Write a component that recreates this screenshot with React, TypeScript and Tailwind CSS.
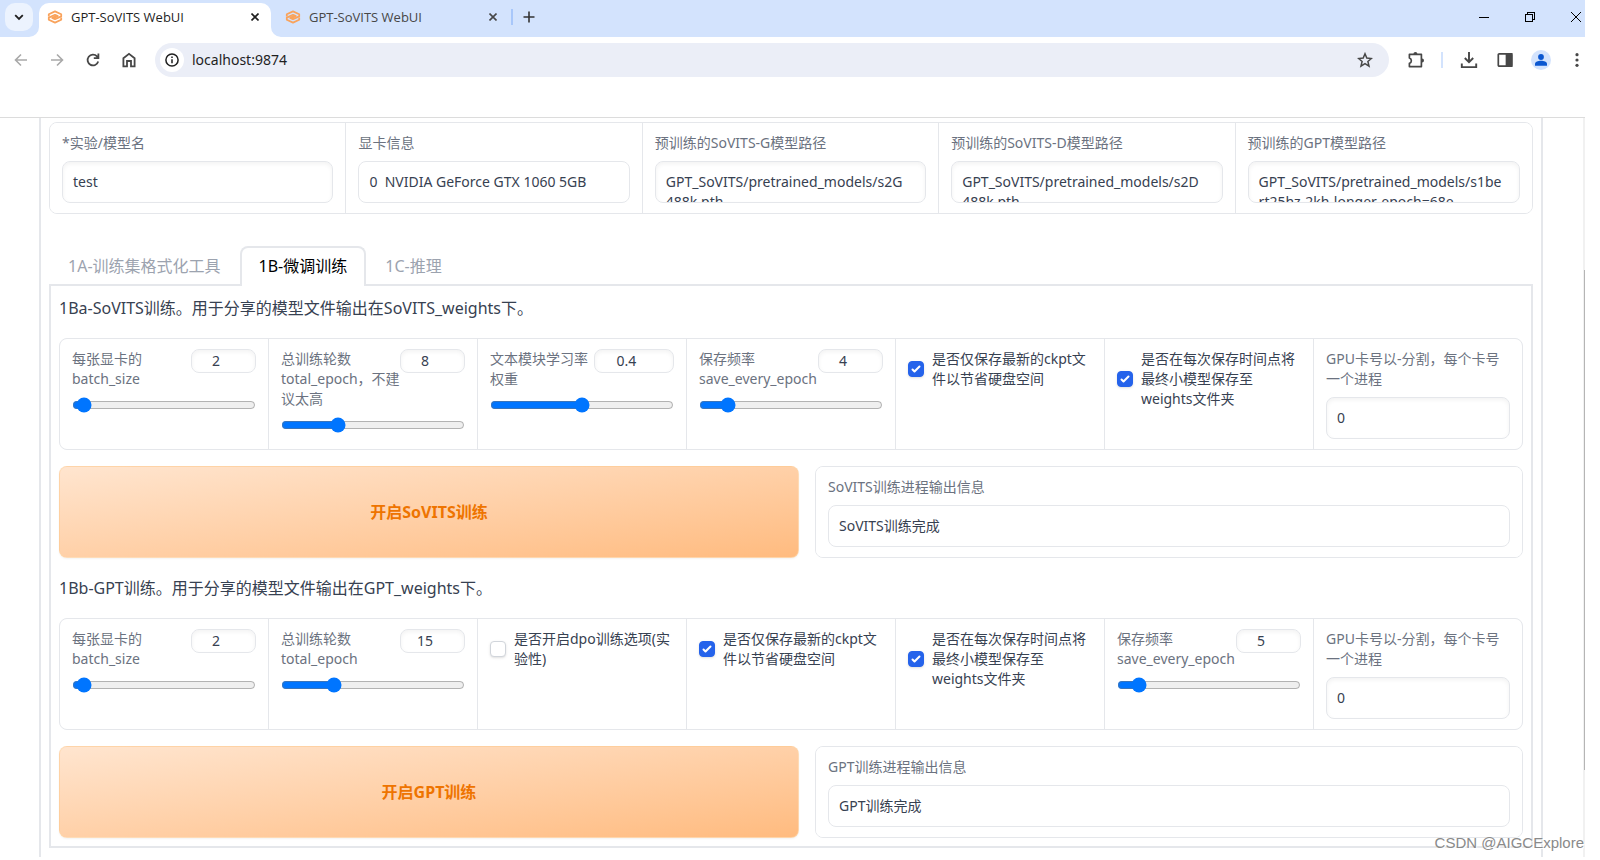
import { useState } from "react";
import type { ReactNode } from "react";

function Favicon() {
  return (
    <svg viewBox="0 0 16 16" className="size-4 shrink-0" fill="none" stroke="#f9a35c" strokeWidth="1.8" strokeLinejoin="round" aria-hidden="true">
      <path d="M1.800 7.600V5.200L8 2.400l6.200 2.800v2.200L8 10.200 5.200 8.900 9.800 6.600" />
      <path d="M14.200 8.400v2.400L8 13.600l-6.200-2.800V8.600L8 5.800l2.800 1.300-4.600 2.300" />
    </svg>
  );
}

function IconButton({ label, children, className = "" }: { label: string; children: ReactNode; className?: string }) {
  return (
    <button type="button" aria-label={label} className={`flex shrink-0 items-center justify-center ${className}`}>
      {children}
    </button>
  );
}

function CloseIcon() {
  return (
    <svg viewBox="0 0 8 8" className="size-2" stroke="currentColor" strokeWidth="1.6" aria-hidden="true">
      <path d="M0.5 0.5 7.5 7.5M7.5 0.5 0.5 7.5" />
    </svg>
  );
}

function TabTitle() {
  return <span className="ml-2 flex-1 font-['Open_Sans',sans-serif] text-[13px]">GPT-SoVITS WebUI</span>;
}

function TabStrip() {
  return (
    <header className="flex h-[37px] items-stretch bg-[#d3e3fd] pl-[5px] text-[#1f1f1f]">
      <IconButton label="搜索标签页" className="mt-[3px] size-7 rounded-[10px] bg-[#ecf3fe]">
        <svg viewBox="0 0 10 10" className="size-[10px]" fill="none" stroke="currentColor" strokeWidth="1.8" aria-hidden="true">
          <path d="M1.2 3.2 5 7 8.8 3.2" />
        </svg>
      </IconButton>
      <div className="relative ml-[6px] mt-[3px] flex w-[232px] items-center rounded-t-[10px] bg-white pl-2 pr-3 pb-[6px]">
        <svg viewBox="0 0 10 10" className="absolute -left-[10px] bottom-0 size-[10px]" fill="#fff" aria-hidden="true">
          <path d="M10 0v10H0A10 10 0 0 0 10 0Z" />
        </svg>
        <svg viewBox="0 0 10 10" className="absolute -right-[10px] bottom-0 size-[10px]" fill="#fff" aria-hidden="true">
          <path d="M0 0v10h10A10 10 0 0 1 0 0Z" />
        </svg>
        <Favicon />
        <TabTitle />
        <IconButton label="关闭">
          <CloseIcon />
        </IconButton>
      </div>
      <div className="mt-[3px] flex w-[240px] items-center pl-[14px] pr-[14px] pb-[6px] text-[#474747]">
        <Favicon />
        <TabTitle />
        <IconButton label="关闭">
          <CloseIcon />
        </IconButton>
      </div>
      <div className="mt-[9px] h-4 w-[2px] bg-[#a8c7fa]" />
      <IconButton label="新标签页" className="mb-1 ml-[10px] w-3 text-[#333]">
        <svg viewBox="0 0 12 12" className="size-3" stroke="currentColor" strokeWidth="1.6" aria-hidden="true">
          <path d="M6 0.5v11M0.5 6h11" />
        </svg>
      </IconButton>
      <div className="ml-auto flex items-start gap-9 pr-1 pt-3 text-black">
        <IconButton label="最小化">
          <svg viewBox="0 0 10 10" className="size-[10px]" stroke="currentColor" shapeRendering="crispEdges" aria-hidden="true">
            <path d="M0 5.5h10" />
          </svg>
        </IconButton>
        <IconButton label="还原">
          <svg viewBox="0 0 10 10" className="size-[10px]" fill="none" stroke="currentColor" shapeRendering="crispEdges" aria-hidden="true">
            <path d="M0.5 2.5h7v7h-7ZM2.5 2.5v-2h7v7h-2" />
          </svg>
        </IconButton>
        <IconButton label="关闭窗口">
          <svg viewBox="0 0 10 10" className="size-[10px]" stroke="currentColor" aria-hidden="true">
            <path d="M0 0 10 10M10 0 0 10" />
          </svg>
        </IconButton>
      </div>
    </header>
  );
}

function Toolbar() {
  return (
    <div className="flex h-[46px] items-center bg-white pl-3 text-[#474747]">
      <div className="flex items-center gap-[18px]">
        <IconButton label="后退" className="size-[18px] text-[#a9a9a9]">
          <svg viewBox="0 0 18 18" className="size-[18px]" fill="none" stroke="currentColor" strokeWidth="1.6" aria-hidden="true">
            <path d="M15 9H4M9 3.5 3.5 9 9 14.5" />
          </svg>
        </IconButton>
        <IconButton label="前进" className="size-[18px] text-[#a9a9a9]">
          <svg viewBox="0 0 18 18" className="size-[18px]" fill="none" stroke="currentColor" strokeWidth="1.6" aria-hidden="true">
            <path d="M3 9h11M9 3.5 14.5 9 9 14.5" />
          </svg>
        </IconButton>
        <IconButton label="重新加载" className="size-[18px]">
          <svg viewBox="0 0 18 18" className="size-[18px]" fill="none" stroke="currentColor" strokeWidth="1.8" aria-hidden="true">
            <path d="M14.2 10.5A5.4 5.4 0 1 1 13 5.4L14.3 7M14.4 2.6v4.6H9.8" />
          </svg>
        </IconButton>
        <IconButton label="主页" className="size-[18px]">
          <svg viewBox="0 0 18 18" className="size-[18px]" fill="none" stroke="currentColor" strokeWidth="1.8" aria-hidden="true">
            <path d="M3.4 7.2 9 2.9l5.600 4.300v8.200H11V10H7v5.400H3.400Z" />
          </svg>
        </IconButton>
      </div>
      <div className="ml-[17px] flex h-[34px] flex-1 items-center rounded-full bg-[#ebeef7] pl-[5px] pr-4">
        <IconButton label="查看网站信息" className="size-6 rounded-full bg-white text-[#1f1f1f]">
          <svg viewBox="0 0 14 14" className="size-[14px]" fill="none" stroke="currentColor" strokeWidth="1.5" aria-hidden="true">
            <circle cx="7" cy="7" r="6.1" />
            <path d="M7 6.300v4M7 3.600v1.500" />
          </svg>
        </IconButton>
        <input aria-label="地址" defaultValue="localhost:9874" className="ml-2 min-w-0 flex-1 bg-transparent text-sm text-[#1f1f1f] outline-none" />
        <IconButton label="为此标签页添加书签">
          <svg viewBox="0 0 16 16" className="size-4" fill="none" stroke="currentColor" strokeWidth="1.5" aria-hidden="true">
            <path d="m8 1.800 1.800 4.300 4.600.4-3.500 3 1.100 4.600L8 11.700l-4 2.400 1.100-4.600-3.500-3 4.600-.4Z" />
          </svg>
        </IconButton>
      </div>
      <div className="ml-[18px] flex items-center">
        <IconButton label="扩展程序">
          <svg viewBox="0 0 18 18" className="size-[18px]" fill="none" stroke="currentColor" strokeWidth="1.700" aria-hidden="true">
            <path d="M2.400 3.400h12v12.200h-12v-3.200c2.600-.8 2.600-4.600 0-5.400Z" strokeLinejoin="round" />
            <path d="M6.400 3a2 2 0 0 1 4 0ZM15 7.500a2 2 0 0 1 0 4Z" fill="currentColor" stroke="none" />
          </svg>
        </IconButton>
        <div className="ml-4 h-4 w-[2px] bg-[#d3e3fd]" />
        <IconButton label="下载" className="ml-[17px]">
          <svg viewBox="0 0 18 18" className="size-[18px]" fill="none" stroke="currentColor" strokeWidth="1.900" aria-hidden="true">
            <path d="M9 1v10M4.800 7 9 11.200 13.200 7M1.800 12.500v3.600h14.400v-3.600" />
          </svg>
        </IconButton>
        <IconButton label="侧边栏" className="ml-[18px]">
          <svg viewBox="0 0 18 18" className="size-[18px]" fill="none" stroke="currentColor" strokeWidth="1.700" aria-hidden="true">
            <rect x="2.300" y="2.800" width="13.400" height="12.400" rx="1" />
            <path d="M10.500 2.800h5.200v12.400h-5.200Z" fill="currentColor" />
          </svg>
        </IconButton>
        <IconButton label="个人资料" className="ml-[17px] size-5 rounded-full bg-[#d3e3fd] text-[#0b57d0]">
          <svg viewBox="0 0 12 12" className="size-3" fill="currentColor" aria-hidden="true">
            <circle cx="6" cy="3" r="2.900" />
            <path d="M0 11.800V10c0-2 3-3.200 6-3.200s6 1.200 6 3.200v1.800Z" />
          </svg>
        </IconButton>
        <IconButton label="菜单" className="ml-6 mr-[6px]">
          <svg viewBox="0 0 4 14" className="h-[14px] w-1" fill="currentColor" aria-hidden="true">
            <circle cx="2" cy="1.700" r="1.600" />
            <circle cx="2" cy="7" r="1.600" />
            <circle cx="2" cy="12.300" r="1.600" />
          </svg>
        </IconButton>
      </div>
    </div>
  );
}

function Row({ children, className }: { children: ReactNode; className: string }) {
  return (
    <div className={`grid overflow-hidden rounded-lg border border-[#e5e7eb] ${className}`}>{children}</div>
  );
}

type FieldProps = { id: string; label: string; value: string; readOnly?: boolean };

function TextField({ id, label, value, readOnly = false }: FieldProps) {
  return (
    <div className="flex min-w-0 flex-col bg-white px-3 py-[10px]">
      <label htmlFor={id} className="mb-2 text-[#6b7280]">{label}</label>
      <textarea
        id={id}
        defaultValue={value}
        readOnly={readOnly}
        className={`block h-[42px] w-full resize-none overflow-hidden break-words rounded-lg border border-[#e5e7eb] p-[10px] outline-none ${readOnly ? "" : "shadow-[inset_0_2px_4px_0_rgba(0,0,0,0.05)]"}`}
      />
    </div>
  );
}

type SliderProps = { id: string; label: string; min: number; max: number; step?: number; initial: number; wide?: boolean };

function SliderField({ id, label, min, max, step = 1, initial, wide = false }: SliderProps) {
  const [value, setValue] = useState(initial);
  return (
    <div className="min-w-0 bg-white px-3 py-[10px]">
      <div className="mb-2 flex items-start justify-between">
        <label htmlFor={id} className="min-w-0 flex-1 text-[#6b7280]">{label}</label>
        <input
          type="number"
          aria-label={`${label} 数值`}
          min={min}
          max={max}
          step={step}
          value={value}
          onChange={(e) => setValue(Number(e.target.value))}
          className={`h-6 shrink-0 rounded-lg border border-[#e5e7eb] px-1 pb-[2px] text-center shadow-[inset_0_2px_4px_0_rgba(0,0,0,0.05)] outline-none ${wide ? "w-20" : "w-[65px]"}`}
        />
      </div>
      <input
        id={id}
        type="range"
        min={min}
        max={max}
        step={step}
        value={value}
        onChange={(e) => setValue(Number(e.target.value))}
        className="block h-4 w-full accent-[#0075ff]"
      />
    </div>
  );
}

function CheckField({ id, label, initial }: { id: string; label: string; initial: boolean }) {
  const [checked, setChecked] = useState(initial);
  return (
    <div className="min-w-0 bg-white px-3 py-[10px]">
      <label htmlFor={id} className="flex items-center gap-2">
        <span className="grid shrink-0">
          <input
            id={id}
            type="checkbox"
            checked={checked}
            onChange={(e) => setChecked(e.target.checked)}
            className="col-start-1 row-start-1 size-4 appearance-none rounded border border-[#d1d5db] bg-white shadow-sm checked:border-[#2563eb] checked:bg-[#2563eb]"
          />
          {checked && (
            <svg viewBox="0 0 16 16" className="pointer-events-none col-start-1 row-start-1 size-4" fill="#fff" aria-hidden="true">
              <path d="M12.207 4.793a1 1 0 0 1 0 1.414l-5 5a1 1 0 0 1-1.414 0l-2-2a1 1 0 0 1 1.414-1.414L6.500 9.086l4.293-4.293a1 1 0 0 1 1.414 0z" />
            </svg>
          )}
        </span>
        <span className="min-w-0 flex-1">{label}</span>
      </label>
    </div>
  );
}

function RunRow({ action, id, label, value }: { action: string } & FieldProps) {
  return (
    <div className="grid grid-cols-[740fr_708fr] gap-4">
      <button type="button" className="rounded-lg border border-[#fed7aa]/60 bg-linear-to-br from-[#ffe5cf] to-[#ffbb7f] text-base font-bold text-[#ee7400] shadow-[0_1px_2px_rgba(0,0,0,0.05)]">
        {action}
      </button>
      <div className="overflow-hidden rounded-lg border border-[#e5e7eb]">
        <TextField id={id} label={label} value={value} readOnly />
      </div>
    </div>
  );
}

const TABS = ["1A-训练集格式化工具", "1B-微调训练", "1C-推理"];

export default function App() {
  const [tab, setTab] = useState(1);
  return (
    <div className="relative min-h-screen overflow-hidden bg-white pr-[15px] font-['Noto_Sans','Noto_Sans_CJK_SC',sans-serif] text-sm/5 text-[#374151]">
      <TabStrip />
      <Toolbar />
      <div className="mt-[34px] flex border-t border-[#dcdcdc]">
        <main className="min-w-0 flex-1 pl-[39px] pr-10">
          <div className="border-x-2 border-[#e5e7eb] px-2 pb-[9px] pt-1">
            <Row className="grid-cols-5 divide-x divide-[#e5e7eb]">
              <TextField id="exp-name" label="*实验/模型名" value="test" />
              <TextField id="gpu-info" label="显卡信息" value={"0\u00a0 NVIDIA GeForce GTX 1060 5GB"} readOnly />
              <TextField id="sovits-g" label="预训练的SoVITS-G模型路径" value={"GPT_SoVITS/pretrained_models/s2G\n488k.pth"} />
              <TextField id="sovits-d" label="预训练的SoVITS-D模型路径" value={"GPT_SoVITS/pretrained_models/s2D\n488k.pth"} />
              <TextField id="gpt-path" label="预训练的GPT模型路径" value={"GPT_SoVITS/pretrained_models/s1be\nrt25hz-2kh-longer-epoch=68e-step=50232.ckpt"} />
            </Row>

            <div role="tablist" className="relative -mb-[2px] mt-8 flex text-base">
              {TABS.map((name, i) => (
                <button
                  key={name}
                  type="button"
                  role="tab"
                  aria-selected={i === tab}
                  onClick={() => setTab(i)}
                  className={`h-10 rounded-t-lg border-2 border-b-0 px-[17px] pb-[2px] ${i === tab ? "border-[#e5e7eb] bg-white text-black" : "border-transparent text-[#9ca3af]"}`}
                >
                  {name}
                </button>
              ))}
            </div>

            <section className="flex flex-col gap-4 border-2 border-[#e5e7eb] p-2">
              <h2 className="text-base/7">1Ba-SoVITS训练。用于分享的模型文件输出在SoVITS_weights下。</h2>
              <Row className="grid-cols-7 gap-px bg-[#e5e7eb]">
                <SliderField id="s-batch" label="每张显卡的batch_size" min={1} max={40} initial={2} />
                <SliderField id="s-epoch" label="总训练轮数total_epoch，不建议太高" min={1} max={25} initial={8} />
                <SliderField id="s-lr" label="文本模块学习率权重" min={0.2} max={0.6} step={0.05} initial={0.4} wide />
                <SliderField id="s-save" label="保存频率save_every_epoch" min={1} max={25} initial={4} />
                <CheckField id="s-latest" label="是否仅保存最新的ckpt文件以节省硬盘空间" initial />
                <CheckField id="s-weights" label="是否在每次保存时间点将最终小模型保存至weights文件夹" initial />
                <TextField id="s-gpu" label="GPU卡号以-分割，每个卡号一个进程" value="0" />
              </Row>
              <RunRow action="开启SoVITS训练" id="s-out" label="SoVITS训练进程输出信息" value="SoVITS训练完成" />

              <h2 className="text-base/7">1Bb-GPT训练。用于分享的模型文件输出在GPT_weights下。</h2>
              <Row className="grid-cols-7 gap-px bg-[#e5e7eb]">
                <SliderField id="g-batch" label="每张显卡的batch_size" min={1} max={40} initial={2} />
                <SliderField id="g-epoch" label="总训练轮数total_epoch" min={2} max={50} initial={15} />
                <CheckField id="g-dpo" label="是否开启dpo训练选项(实验性)" initial={false} />
                <CheckField id="g-latest" label="是否仅保存最新的ckpt文件以节省硬盘空间" initial />
                <CheckField id="g-weights" label="是否在每次保存时间点将最终小模型保存至weights文件夹" initial />
                <SliderField id="g-save" label="保存频率save_every_epoch" min={1} max={50} initial={5} />
                <TextField id="g-gpu" label="GPU卡号以-分割，每个卡号一个进程" value="0" />
              </Row>
              <RunRow action="开启GPT训练" id="g-out" label="GPT训练进程输出信息" value="GPT训练完成" />
            </section>
          </div>
        </main>
        <div className="flex w-[2px] flex-col items-end bg-[#f1f1f1] pt-[152px]">
          <div className="h-[500px] w-px bg-[#b5b5b5]" />
        </div>
      </div>
      <p className="absolute bottom-[5px] right-4 font-['Liberation_Sans',sans-serif] text-[15px]/6 text-[#8a8a8a] [text-shadow:1px_1px_0_#fff]">CSDN @AIGCExplore</p>
    </div>
  );
}
